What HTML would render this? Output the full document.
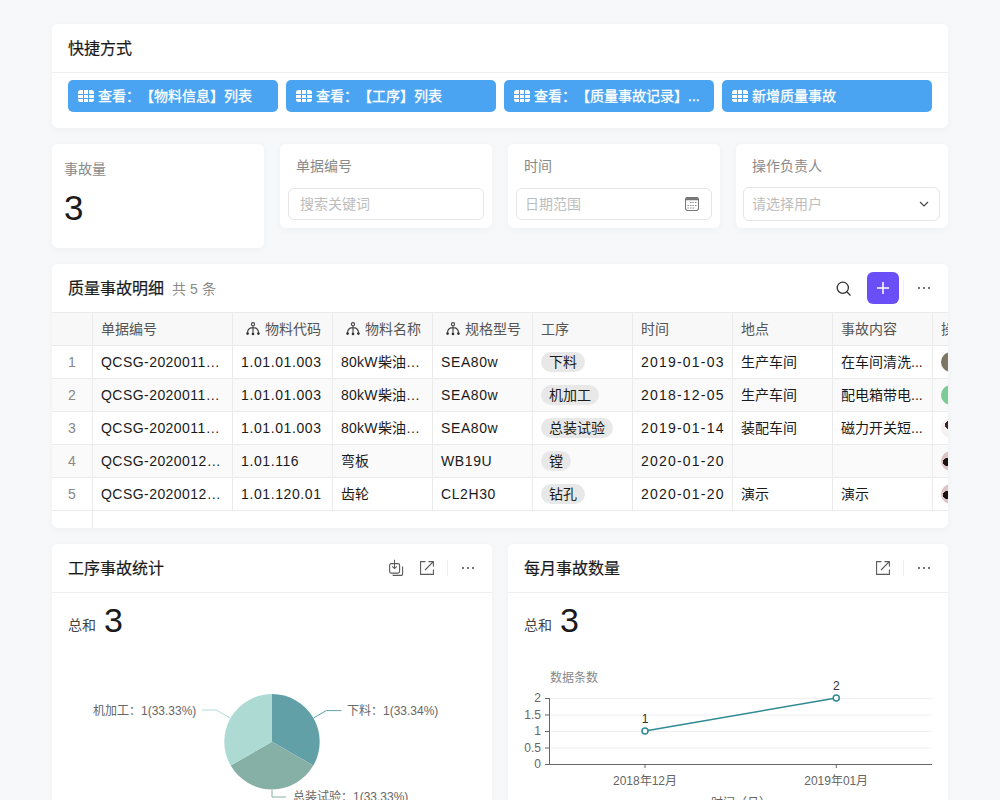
<!DOCTYPE html><html lang="zh-CN"><head><meta charset="utf-8"><style>
*{box-sizing:border-box;margin:0;padding:0}
html,body{width:1000px;height:800px;overflow:hidden}
body{text-spacing-trim:space-all;background:#f7f8fa;font-family:"Liberation Sans",sans-serif;color:#1f1f1f;position:relative}
.card{position:absolute;background:#fff;border-radius:6px;box-shadow:0 2px 8px rgba(0,0,0,0.035)}
.ttl{position:absolute;left:16px;font-size:16px;font-weight:400;-webkit-text-stroke:0.2px #1a1a1a;color:#1a1a1a;line-height:20px;white-space:nowrap}
.ttl span{-webkit-text-stroke:0}
.hdiv{position:absolute;left:0;right:0;height:1px;background:#efefef}
.btn{position:absolute;top:56px;height:32px;width:210px;background:#4aa4f2;border-radius:5px;color:#fff;font-size:14px;font-weight:400;-webkit-text-stroke:0.3px #fff;line-height:32px;white-space:nowrap}
.btn svg{position:absolute;left:10px;top:10px}
.btn span{position:absolute;left:30px;top:0}
.lbl{position:absolute;left:16px;top:12px;font-size:14px;color:#8a8a8a;line-height:20px;white-space:nowrap}
.inp{position:absolute;left:8px;top:44px;width:196px;height:32px;border:1px solid #e6e6e6;border-radius:6px;font-size:14px;color:#bdbdbd;line-height:30px;padding-left:11px;white-space:nowrap}
.c{position:absolute;height:33px;line-height:33px;font-size:14px;white-space:nowrap;overflow:hidden;padding-left:8px;color:#1a1a1a}
.vl{position:absolute;width:1px;background:#ebebeb}
.hl{position:absolute;height:1px;background:#ebebeb;left:0;width:896px}
.tag{display:inline-block;height:20px;line-height:20px;border-radius:10px;background:#e8e8e8;padding:0 8px;vertical-align:middle;position:relative;top:-1px}
.ti{position:absolute;left:13px;top:7px}
.icn{position:absolute}
.dots{position:absolute;width:14px;height:4px}
.pl{position:absolute;font-size:12px;line-height:16px;color:#666;white-space:nowrap}
.yl{position:absolute;left:0;width:33px;text-align:right;font-size:12px;line-height:16px;color:#666}
.xl{position:absolute;width:100px;text-align:center;font-size:12px;line-height:16px;color:#666;white-space:nowrap}
</style></head><body>
<div class="card" style="left:52px;top:24px;width:896px;height:104px">
<div class="ttl" style="top:15px">快捷方式</div><div class="hdiv" style="top:48px"></div>
<div class="btn" style="left:16px"><svg width="16" height="12" viewBox="0 0 16 12"><rect width="16" height="12" rx="2.5" fill="#fff"/><path d="M5.5 0V12M10.5 0V12M0 4.5H16M0 8.5H16" stroke="#4aa4f2" stroke-width="1"/></svg><span>查看：【物料信息】列表</span></div>
<div class="btn" style="left:234px"><svg width="16" height="12" viewBox="0 0 16 12"><rect width="16" height="12" rx="2.5" fill="#fff"/><path d="M5.5 0V12M10.5 0V12M0 4.5H16M0 8.5H16" stroke="#4aa4f2" stroke-width="1"/></svg><span>查看：【工序】列表</span></div>
<div class="btn" style="left:452px"><svg width="16" height="12" viewBox="0 0 16 12"><rect width="16" height="12" rx="2.5" fill="#fff"/><path d="M5.5 0V12M10.5 0V12M0 4.5H16M0 8.5H16" stroke="#4aa4f2" stroke-width="1"/></svg><span>查看：【质量事故记录】...</span></div>
<div class="btn" style="left:670px"><svg width="16" height="12" viewBox="0 0 16 12"><rect width="16" height="12" rx="2.5" fill="#fff"/><path d="M5.5 0V12M10.5 0V12M0 4.5H16M0 8.5H16" stroke="#4aa4f2" stroke-width="1"/></svg><span>新增质量事故</span></div>
</div>
<div class="card" style="left:52px;top:144px;width:212px;height:104px"><div class="lbl" style="left:12px;top:15px">事故量</div><div style="position:absolute;left:12px;top:46px;font-size:35px;line-height:36px;color:#1a1a1a">3</div></div>
<div class="card" style="left:280px;top:144px;width:212px;height:84px"><div class="lbl">单据编号</div><div class="inp">搜索关键词</div></div>
<div class="card" style="left:508px;top:144px;width:212px;height:84px"><div class="lbl">时间</div><div class="inp" style="padding-left:8px">日期范围<svg class="icn" style="left:168px;top:8px" width="14" height="14" viewBox="0 0 14 14"><rect x="0.5" y="0.5" width="13" height="13" rx="2.2" fill="none" stroke="#777" stroke-width="1.1"/><path d="M0.5 2.7a2.2 2.2 0 0 1 2.2-2.2h8.6a2.2 2.2 0 0 1 2.2 2.2V3.3H0.5z" fill="#777"/><rect x="5" y="5" width="1.4" height="1" fill="#888"/><rect x="7.5" y="5" width="1.4" height="1" fill="#888"/><rect x="10" y="5" width="1.4" height="1" fill="#888"/><rect x="2.5" y="8" width="1.4" height="1" fill="#888"/><rect x="5" y="8" width="1.4" height="1" fill="#888"/><rect x="7.5" y="8" width="1.4" height="1" fill="#888"/><rect x="10" y="8" width="1.4" height="1" fill="#888"/><rect x="2.5" y="10.5" width="1.4" height="1" fill="#888"/><rect x="5" y="10.5" width="1.4" height="1" fill="#888"/><rect x="7.5" y="10.5" width="1.4" height="1" fill="#888"/></svg></div></div>
<div class="card" style="left:736px;top:144px;width:212px;height:84px"><div class="lbl">操作负责人</div><div class="inp" style="left:7px;width:197px;top:43px;height:34px;padding-left:8px;line-height:32px">请选择用户<svg class="icn" style="left:175px;top:12px" width="10" height="8" viewBox="0 0 10 8"><path d="M1 2L5 6L9 2" fill="none" stroke="#444" stroke-width="1.1"/></svg></div></div>
<div class="card" style="left:52px;top:264px;width:896px;height:264px;overflow:hidden">
<div class="ttl" style="top:15px">质量事故明细<span style="font-weight:400;font-size:14px;color:#8a8a8a;margin-left:8px">共 5 条</span></div>
<svg class="icn" style="left:784px;top:17px" width="16" height="16" viewBox="0 0 16 16"><circle cx="6.8" cy="6.8" r="5.6" fill="none" stroke="#333" stroke-width="1.3"/><path d="M11 11L14.5 14.5" stroke="#333" stroke-width="1.3"/></svg>
<div style="position:absolute;left:815px;top:8px;width:32px;height:32px;border-radius:6px;background:#6a4ff6"><svg class="icn" style="left:9px;top:9px" width="14" height="14"><path d="M7 1V13M1 7H13" stroke="#fff" stroke-width="1.5"/></svg></div>
<div class="vl" style="left:851px;top:16px;height:16px;background:#eeeeee"></div>
<svg class="icn" style="left:865px;top:22px" width="14" height="4"><circle cx="2" cy="2" r="1.05" fill="#555"/><circle cx="7" cy="2" r="1.05" fill="#555"/><circle cx="12" cy="2" r="1.05" fill="#555"/></svg>
<div style="position:absolute;left:0;top:48px;width:896px;height:33px;background:#f8f8f8"></div>
<div style="position:absolute;left:0;top:114px;width:896px;height:33px;background:#fafafa"></div>
<div style="position:absolute;left:0;top:180px;width:896px;height:33px;background:#fafafa"></div>
<div class="hl" style="top:48px"></div>
<div class="hl" style="top:81px"></div>
<div class="hl" style="top:114px"></div>
<div class="hl" style="top:147px"></div>
<div class="hl" style="top:180px"></div>
<div class="hl" style="top:213px"></div>
<div class="hl" style="top:246px"></div>
<div class="vl" style="left:40px;top:48px;height:230px"></div>
<div class="vl" style="left:180px;top:48px;height:198px"></div>
<div class="vl" style="left:280px;top:48px;height:198px"></div>
<div class="vl" style="left:380px;top:48px;height:198px"></div>
<div class="vl" style="left:480px;top:48px;height:198px"></div>
<div class="vl" style="left:580px;top:48px;height:198px"></div>
<div class="vl" style="left:680px;top:48px;height:198px"></div>
<div class="vl" style="left:780px;top:48px;height:198px"></div>
<div class="vl" style="left:880px;top:48px;height:198px"></div>
<div class="c" style="left:41px;top:49px;width:139px;color:#555">单据编号</div>
<div class="c" style="left:181px;top:49px;width:99px;color:#555;padding-left:32px"><svg class="ti" width="14" height="16" viewBox="0 0 14 16"><circle cx="7" cy="4.2" r="1.6" fill="none" stroke="#444" stroke-width="1.1"/><path d="M7 5.8V13.5M7 7.6C3 7.6 1.6 9.5 1.4 13M7 7.6C11 7.6 12.4 9.5 12.6 13" fill="none" stroke="#444" stroke-width="1.1"/><circle cx="1.6" cy="13.6" r="1.35" fill="#333"/><circle cx="7" cy="14" r="1.35" fill="#333"/><circle cx="12.4" cy="13.6" r="1.35" fill="#333"/></svg>物料代码</div>
<div class="c" style="left:281px;top:49px;width:99px;color:#555;padding-left:32px"><svg class="ti" width="14" height="16" viewBox="0 0 14 16"><circle cx="7" cy="4.2" r="1.6" fill="none" stroke="#444" stroke-width="1.1"/><path d="M7 5.8V13.5M7 7.6C3 7.6 1.6 9.5 1.4 13M7 7.6C11 7.6 12.4 9.5 12.6 13" fill="none" stroke="#444" stroke-width="1.1"/><circle cx="1.6" cy="13.6" r="1.35" fill="#333"/><circle cx="7" cy="14" r="1.35" fill="#333"/><circle cx="12.4" cy="13.6" r="1.35" fill="#333"/></svg>物料名称</div>
<div class="c" style="left:381px;top:49px;width:99px;color:#555;padding-left:32px"><svg class="ti" width="14" height="16" viewBox="0 0 14 16"><circle cx="7" cy="4.2" r="1.6" fill="none" stroke="#444" stroke-width="1.1"/><path d="M7 5.8V13.5M7 7.6C3 7.6 1.6 9.5 1.4 13M7 7.6C11 7.6 12.4 9.5 12.6 13" fill="none" stroke="#444" stroke-width="1.1"/><circle cx="1.6" cy="13.6" r="1.35" fill="#333"/><circle cx="7" cy="14" r="1.35" fill="#333"/><circle cx="12.4" cy="13.6" r="1.35" fill="#333"/></svg>规格型号</div>
<div class="c" style="left:481px;top:49px;width:99px;color:#555">工序</div>
<div class="c" style="left:581px;top:49px;width:99px;color:#555">时间</div>
<div class="c" style="left:681px;top:49px;width:99px;color:#555">地点</div>
<div class="c" style="left:781px;top:49px;width:99px;color:#555">事故内容</div>
<div class="c" style="left:881px;top:49px;width:99px;color:#555">操作负责人</div>
<div class="c" style="left:0;top:82px;width:40px;padding:0;text-align:center;color:#888">1</div>
<div class="c" style="left:41px;top:82px;width:139px;letter-spacing:0.45px">QCSG-2020011…</div>
<div class="c" style="left:181px;top:82px;width:99px;letter-spacing:0.6px">1.01.01.003</div>
<div class="c" style="left:281px;top:82px;width:99px;letter-spacing:0.2px">80kW柴油…</div>
<div class="c" style="left:381px;top:82px;width:99px;letter-spacing:0.6px">SEA80w</div>
<div class="c" style="left:481px;top:82px;width:99px"><span class="tag">下料</span></div>
<div class="c" style="left:581px;top:82px;width:99px;letter-spacing:1.2px">2019-01-03</div>
<div class="c" style="left:681px;top:82px;width:99px">生产车间</div>
<div class="c" style="left:781px;top:82px;width:99px">在车间清洗...</div>
<div style="position:absolute;left:889px;top:88px;width:20px;height:20px;border-radius:10px;background:linear-gradient(90deg,#7a7260,#8f8470)"></div>
<div class="c" style="left:0;top:115px;width:40px;padding:0;text-align:center;color:#888">2</div>
<div class="c" style="left:41px;top:115px;width:139px;letter-spacing:0.45px">QCSG-2020011…</div>
<div class="c" style="left:181px;top:115px;width:99px;letter-spacing:0.6px">1.01.01.003</div>
<div class="c" style="left:281px;top:115px;width:99px;letter-spacing:0.2px">80kW柴油…</div>
<div class="c" style="left:381px;top:115px;width:99px;letter-spacing:0.6px">SEA80w</div>
<div class="c" style="left:481px;top:115px;width:99px"><span class="tag">机加工</span></div>
<div class="c" style="left:581px;top:115px;width:99px;letter-spacing:1.2px">2018-12-05</div>
<div class="c" style="left:681px;top:115px;width:99px">生产车间</div>
<div class="c" style="left:781px;top:115px;width:99px">配电箱带电...</div>
<div style="position:absolute;left:889px;top:121px;width:20px;height:20px;border-radius:10px;background:#7dcb95"></div>
<div class="c" style="left:0;top:148px;width:40px;padding:0;text-align:center;color:#888">3</div>
<div class="c" style="left:41px;top:148px;width:139px;letter-spacing:0.45px">QCSG-2020011…</div>
<div class="c" style="left:181px;top:148px;width:99px;letter-spacing:0.6px">1.01.01.003</div>
<div class="c" style="left:281px;top:148px;width:99px;letter-spacing:0.2px">80kW柴油…</div>
<div class="c" style="left:381px;top:148px;width:99px;letter-spacing:0.6px">SEA80w</div>
<div class="c" style="left:481px;top:148px;width:99px"><span class="tag">总装试验</span></div>
<div class="c" style="left:581px;top:148px;width:99px;letter-spacing:1.2px">2019-01-14</div>
<div class="c" style="left:681px;top:148px;width:99px">装配车间</div>
<div class="c" style="left:781px;top:148px;width:99px">磁力开关短...</div>
<div style="position:absolute;left:889px;top:154px;width:20px;height:20px;border-radius:10px;background:radial-gradient(circle at 40% 35%,#3a2626 0,#3a2626 22%,#f6f0f0 23%)"></div>
<div class="c" style="left:0;top:181px;width:40px;padding:0;text-align:center;color:#888">4</div>
<div class="c" style="left:41px;top:181px;width:139px;letter-spacing:0.45px">QCSG-2020012…</div>
<div class="c" style="left:181px;top:181px;width:99px;letter-spacing:0.6px">1.01.116</div>
<div class="c" style="left:281px;top:181px;width:99px">弯板</div>
<div class="c" style="left:381px;top:181px;width:99px;letter-spacing:0.6px">WB19U</div>
<div class="c" style="left:481px;top:181px;width:99px"><span class="tag">镗</span></div>
<div class="c" style="left:581px;top:181px;width:99px;letter-spacing:1.2px">2020-01-20</div>
<div class="c" style="left:681px;top:181px;width:99px"></div>
<div class="c" style="left:781px;top:181px;width:99px"></div>
<div style="position:absolute;left:889px;top:187px;width:20px;height:20px;border-radius:10px;background:radial-gradient(circle at 28% 55%,#1a1212 0,#1a1212 20%,#dcc4c4 21%)"></div>
<div class="c" style="left:0;top:214px;width:40px;padding:0;text-align:center;color:#888">5</div>
<div class="c" style="left:41px;top:214px;width:139px;letter-spacing:0.45px">QCSG-2020012…</div>
<div class="c" style="left:181px;top:214px;width:99px;letter-spacing:0.6px">1.01.120.01</div>
<div class="c" style="left:281px;top:214px;width:99px">齿轮</div>
<div class="c" style="left:381px;top:214px;width:99px;letter-spacing:0.6px">CL2H30</div>
<div class="c" style="left:481px;top:214px;width:99px"><span class="tag">钻孔</span></div>
<div class="c" style="left:581px;top:214px;width:99px;letter-spacing:1.2px">2020-01-20</div>
<div class="c" style="left:681px;top:214px;width:99px">演示</div>
<div class="c" style="left:781px;top:214px;width:99px">演示</div>
<div style="position:absolute;left:889px;top:220px;width:20px;height:20px;border-radius:10px;background:radial-gradient(circle at 28% 55%,#1a1212 0,#1a1212 20%,#dcc4c4 21%)"></div>
</div>
<div class="card" style="left:52px;top:544px;width:440px;height:300px;overflow:hidden">
<div class="ttl" style="top:15px">工序事故统计</div><div class="hdiv" style="top:48px"></div>
<svg class="icn" style="left:337px;top:15px" width="16" height="18" viewBox="0 0 16 18"><rect x="0.6" y="4.6" width="10" height="9.5" rx="1.6" fill="none" stroke="#5a5a5a" stroke-width="1.1"/><path d="M3.6 16.4H12.2a1.4 1.4 0 0 0 1.4-1.4V7.6" fill="none" stroke="#5a5a5a" stroke-width="1.1"/><path d="M5.5 0.8V9.6M3.2 7.3L5.5 9.6L7.8 7.3" fill="none" stroke="#5a5a5a" stroke-width="1.05"/></svg><svg class="icn" style="left:368px;top:17px" width="14" height="14" viewBox="0 0 14 14"><path d="M5.5 0.6H0.6V13.4H13.4V8.5" fill="none" stroke="#5a5a5a" stroke-width="1.1"/><path d="M13.4 5.5V0.6H8.5M13.4 0.6L5 9" fill="none" stroke="#5a5a5a" stroke-width="1.1"/></svg><div class="vl" style="left:395px;top:16px;height:16px;background:#eeeeee"></div><svg class="icn" style="left:409px;top:22px" width="14" height="4"><circle cx="2" cy="2" r="1.05" fill="#555"/><circle cx="7" cy="2" r="1.05" fill="#555"/><circle cx="12" cy="2" r="1.05" fill="#555"/></svg>
<div style="position:absolute;left:16px;top:71px;font-size:14px;line-height:20px;color:#444">总和</div>
<div style="position:absolute;left:52px;top:58.5px;font-size:34px;line-height:34px;color:#1a1a1a">3</div>
<svg style="position:absolute;left:0;top:0" width="440" height="300" viewBox="0 0 440 300"><path d="M220 197.7L220.00 150.00A47.7 47.7 0 0 1 261.31 221.55Z" fill="#62a0a8"/><path d="M220 197.7L261.31 221.55A47.7 47.7 0 0 1 178.69 221.55Z" fill="#86b0a6"/><path d="M220 197.7L178.69 221.55A47.7 47.7 0 0 1 220.00 150.00Z" fill="#addbd3"/><path d="M261.8 173.8L274.3 166.6H289.5" fill="none" stroke="#62a0a8" stroke-width="1"/><path d="M178 174L164.4 166H150" fill="none" stroke="#addbd3" stroke-width="1"/><path d="M220 246V253H234" fill="none" stroke="#86b0a6" stroke-width="1"/></svg><div class="pl" style="left:41px;top:159px">机加工：1(33.33%)</div><div class="pl" style="left:295px;top:159px">下料：1(33.34%)</div><div class="pl" style="left:241px;top:245px">总装试验：1(33.33%)</div>
</div>
<div class="card" style="left:508px;top:544px;width:440px;height:300px;overflow:hidden">
<div class="ttl" style="top:15px">每月事故数量</div><div class="hdiv" style="top:48px"></div>
<svg class="icn" style="left:368px;top:17px" width="14" height="14" viewBox="0 0 14 14"><path d="M5.5 0.6H0.6V13.4H13.4V8.5" fill="none" stroke="#5a5a5a" stroke-width="1.1"/><path d="M13.4 5.5V0.6H8.5M13.4 0.6L5 9" fill="none" stroke="#5a5a5a" stroke-width="1.1"/></svg><div class="vl" style="left:395px;top:16px;height:16px;background:#eeeeee"></div><svg class="icn" style="left:409px;top:22px" width="14" height="4"><circle cx="2" cy="2" r="1.05" fill="#555"/><circle cx="7" cy="2" r="1.05" fill="#555"/><circle cx="12" cy="2" r="1.05" fill="#555"/></svg>
<div style="position:absolute;left:16px;top:71px;font-size:14px;line-height:20px;color:#444">总和</div>
<div style="position:absolute;left:52px;top:58.5px;font-size:34px;line-height:34px;color:#1a1a1a">3</div>
<svg style="position:absolute;left:0;top:0" width="440" height="300" viewBox="0 0 440 300"><path d="M42 154.5H424" stroke="#f0f0f0" stroke-width="1"/><path d="M42 171.0H424" stroke="#f0f0f0" stroke-width="1"/><path d="M42 187.5H424" stroke="#f0f0f0" stroke-width="1"/><path d="M42 204.0H424" stroke="#f0f0f0" stroke-width="1"/><path d="M41.5 154V220.5H424" fill="none" stroke="#666" stroke-width="1"/><path d="M37 154.5H41.5" stroke="#666" stroke-width="1"/><path d="M37 171.0H41.5" stroke="#666" stroke-width="1"/><path d="M37 187.5H41.5" stroke="#666" stroke-width="1"/><path d="M37 204.0H41.5" stroke="#666" stroke-width="1"/><path d="M37 220.5H41.5" stroke="#666" stroke-width="1"/><path d="M137 220V224" stroke="#666" stroke-width="1"/><path d="M328.25 220V224" stroke="#666" stroke-width="1"/><path d="M137 187L328.25 154" stroke="#2f8a94" stroke-width="1.5" fill="none"/><circle cx="137" cy="187" r="3" fill="#fff" stroke="#2f8a94" stroke-width="1.5"/><circle cx="328.25" cy="154" r="3" fill="#fff" stroke="#2f8a94" stroke-width="1.5"/></svg><div class="yl" style="top:146px">2</div><div class="yl" style="top:162.5px">1.5</div><div class="yl" style="top:179px">1</div><div class="yl" style="top:195.5px">0.5</div><div class="yl" style="top:212px">0</div><div class="pl" style="left:42px;top:125.5px;color:#888">数据条数</div><div class="xl" style="left:87px;top:228.5px">2018年12月</div><div class="xl" style="left:278.25px;top:228.5px">2019年01月</div><div class="xl" style="left:87px;top:166.5px;color:#333">1</div><div class="xl" style="left:278.25px;top:133.5px;color:#333">2</div><div class="pl" style="left:203px;top:251px">时间（月）</div>
</div>
</body></html>
